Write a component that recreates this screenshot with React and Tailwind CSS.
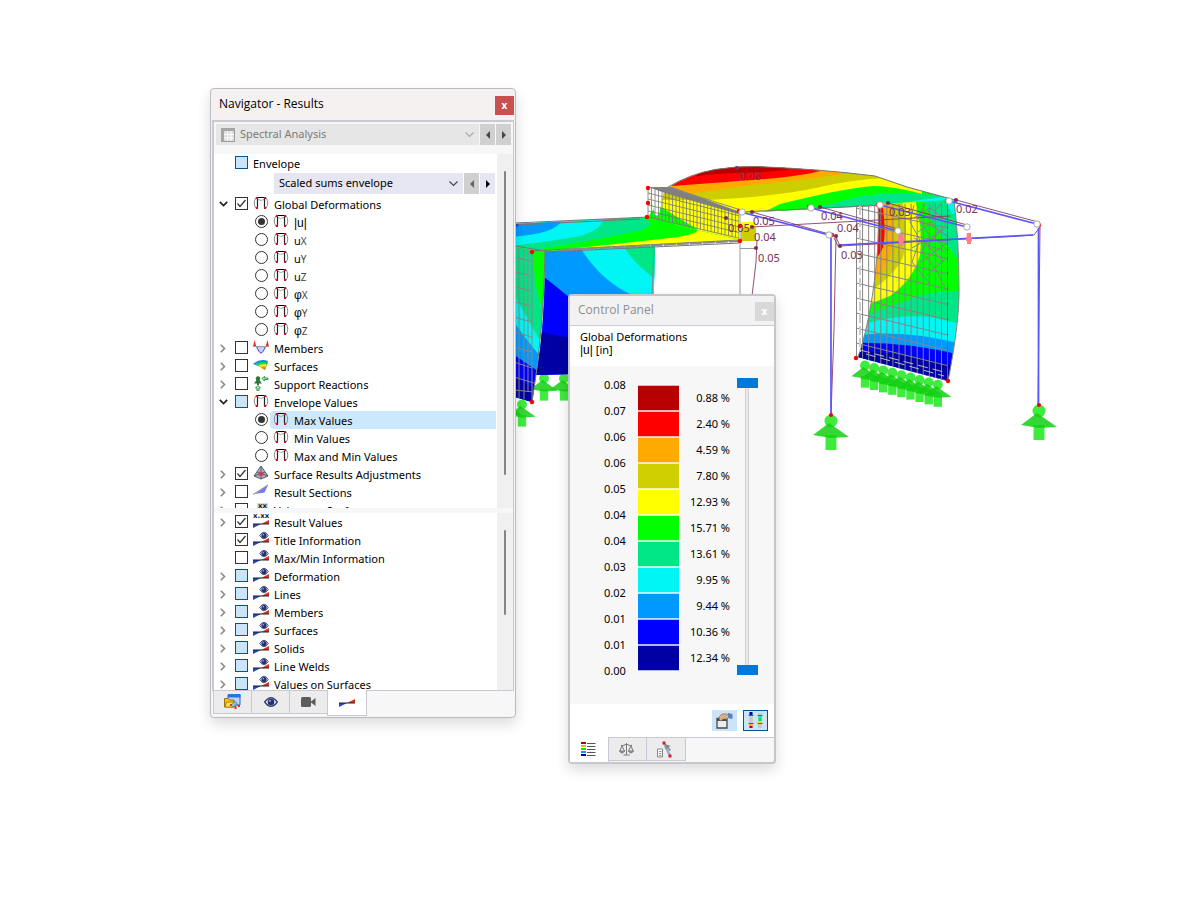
import React from "react";

/* ---------- small drawings ---------- */

function DeformIcon() {
  return (
    <svg width="16" height="14" viewBox="0 0 16 14" className="shrink-0" aria-hidden="true">
      <path d="M3 1.500Q-.5 7 3 12.500M13 1.500Q16.500 7 13 12.500" fill="none" stroke="#8a8a8a" />
      <path d="M4 3Q8 6 12 3" fill="none" stroke="#aaa" />
      <path d="M4.500 11.500V2.500M11.500 11.500V2.500" stroke="#222" strokeWidth="1.200" />
      <path d="M4 1.500H12" stroke="#000" />
      <path d="M3 1h2v2H3zM11 1h2v2h-2zM3 11h2v2H3zM11 11h2v2h-2z" fill="#c8171e" />
    </svg>
  );
}

function MembersIcon() {
  return (
    <svg width="16" height="14" viewBox="0 0 16 14" className="shrink-0" aria-hidden="true">
      <path d="M0 7L1.500 0L3.500 7zM12.500 7L14.500 0L16 7z" fill="#f02a2a" />
      <path d="M3.500 6.500H12.500Q10 13 8 13T3.500 6.500z" fill="#c8cdf5" stroke="#3a45d8" />
      <path d="M0 6.500H16" stroke="#999" />
    </svg>
  );
}

function SurfacesIcon() {
  return (
    <svg width="16" height="14" viewBox="0 0 16 14" className="shrink-0" aria-hidden="true">
      <path d="M0 6Q7 0 15 3L12 12Q6 8 0 6z" fill="#1188ee" />
      <path d="M2 6Q8 3 15 4.500L12 12Q7 8 2 6z" fill="#16d84a" />
      <path d="M5 7.500Q10 5 14 6.500L12 12Q8 9 5 7.500z" fill="#f5e520" />
      <path d="M8 9.500Q10.500 8 13 9L12 12z" fill="#f08a10" />
    </svg>
  );
}

function SupportIcon() {
  return (
    <svg width="16" height="15" viewBox="0 0 16 15" className="shrink-0" aria-hidden="true">
      <circle cx="5" cy="2.500" r="2.200" fill="#267a3a" />
      <path d="M5 2L9 7.500H1zM4 6h2v3H4z" fill="#267a3a" />
      <path d="M9 2.500l2.500-2v1.500H15v1.500h-3.500V5zM5 9.500l2.500 2.500H6v3H4v-3H2.500z" fill="#bfeec8" stroke="#2f9a4a" strokeWidth="1" />
    </svg>
  );
}

function AdjustIcon() {
  return (
    <svg width="16" height="14" viewBox="0 0 16 14" className="shrink-0" aria-hidden="true">
      <path d="M8 0L1 10L8 13L15 10z" fill="#a9adc2" stroke="#4c506a" strokeWidth=".9" />
      <path d="M8 0V13M4 6L15 10M12 6L1 10" stroke="#4c506a" strokeWidth=".8" />
      <path d="M4 8.500l4-3 4 3-4 2z" fill="#d8333f" opacity=".75" />
    </svg>
  );
}

function SectionIcon() {
  return (
    <svg width="16" height="14" viewBox="0 0 16 14" className="shrink-0" aria-hidden="true">
      <path d="M2 10L15 1L11.500 8.500z" fill="#727cf2" />
      <path d="M0 10.500L15 1" stroke="#888" />
    </svg>
  );
}

function BeamShape({ y = 0 }) {
  return (
    <g transform={`translate(0 ${y})`}>
      <path d="M0 4H8L0 8z" fill="#2546c8" />
      <path d="M8 4L16 0V4z" fill="#d8321e" />
      <path d="M0 4H16" stroke="#222" />
    </g>
  );
}

function EyeBeamIcon() {
  return (
    <svg width="16" height="14" viewBox="0 0 16 14" className="shrink-0 overflow-visible" aria-hidden="true">
      <BeamShape y={6} />
      <path d="M6.700 3.500Q11 -3 15.300 3.500Q11 10 6.700 3.500z" fill="#dfe3f5" stroke="#4a5280" />
      <circle cx="11" cy="3.500" r="2.600" fill="#27306e" />
      <circle cx="10.300" cy="2.800" r=".8" fill="#9fb0ee" />
    </svg>
  );
}

function ValueBeamIcon() {
  return (
    <svg width="16" height="14" viewBox="0 0 16 14" className="shrink-0 overflow-visible" aria-hidden="true">
      <text x="0" y="4" fontSize="7" fontWeight="700" fontFamily="'DejaVu Sans',sans-serif" fill="#222">x.xx</text>
      <BeamShape y={6} />
    </svg>
  );
}

function XxIcon() {
  return (
    <svg width="16" height="14" viewBox="0 0 16 14" className="shrink-0" aria-hidden="true">
      <path d="M4 1H15V12H4z" fill="#d8d8d8" />
      <text x="5" y="6" fontSize="7" fontWeight="700" fontFamily="'DejaVu Sans',sans-serif" fill="#222">xx</text>
    </svg>
  );
}

const ICONS = {
  deform: DeformIcon,
  members: MembersIcon,
  surfaces: SurfacesIcon,
  support: SupportIcon,
  adjust: AdjustIcon,
  section: SectionIcon,
  eye: EyeBeamIcon,
  value: ValueBeamIcon,
  xx: XxIcon,
};

function Chevron({ className }) {
  return (
    <svg width="9" height="6" viewBox="0 0 9 6" className={className} aria-hidden="true">
      <path d="M.5 .5L4.500 4.500L8.500 .5" fill="none" stroke="currentColor" strokeWidth="1.200" />
    </svg>
  );
}

function Arrow({ dir }) {
  return (
    <svg width="4" height="8" viewBox="0 0 4 8" aria-hidden="true">
      <path d={dir === "left" ? "M4 0V8L0 4z" : "M0 0V8L4 4z"} fill="currentColor" />
    </svg>
  );
}

/* ---------- tree ---------- */

function Box({ state, id, name, radio }) {
  if (radio) {
    return (
      <span className="relative size-[13px] shrink-0">
        <input id={id} name={name} type="radio" defaultChecked={state === "on"} className="peer block size-[13px] appearance-none rounded-full border border-[#333] bg-white" />
        <span className="pointer-events-none absolute inset-[3px] hidden rounded-full bg-[#333] peer-checked:block" />
      </span>
    );
  }
  if (state === "mixed") {
    return <input id={id} type="checkbox" ref={(el) => { if (el) el.indeterminate = true; }} className="block size-[13px] shrink-0 appearance-none border border-[#005499] bg-[#cce4f7]" />;
  }
  return (
    <span className="relative block size-[13px] shrink-0">
      <input id={id} type="checkbox" defaultChecked={state === "on"} className="peer block size-[13px] appearance-none border border-[#333] bg-white" />
      <svg viewBox="0 0 13 13" className="pointer-events-none absolute inset-0 hidden size-[13px] peer-checked:block" aria-hidden="true">
        <path d="M2.500 6.500L5 9.500L10.500 3" fill="none" stroke="#333" strokeWidth="1.200" />
      </svg>
    </span>
  );
}

function Expander({ open, label }) {
  return (
    <button type="button" aria-label={`Toggle ${label}`} className={open ? "grid h-[18px] w-4 place-items-center text-[#222]" : "grid h-[18px] w-4 place-items-center text-[#888]"}>
      {open ? (
        <svg width="9" height="6" viewBox="0 0 9 6"><path d="M.8 .8L4.500 4.500L8.200 .8" fill="none" stroke="currentColor" strokeWidth="1.700" /></svg>
      ) : (
        <svg width="6" height="9" viewBox="0 0 6 9"><path d="M.8 .8L4.500 4.500L.8 8.200" fill="none" stroke="currentColor" strokeWidth="1.600" /></svg>
      )}
    </button>
  );
}

function Row({ item, prefix }) {
  const [kind, icon, text, state, exp, sub] = item;
  const Icon = ICONS[icon];
  const id = `${prefix}-${text}${sub || ""}`.replace(/\s/g, "-");
  const symbol = text === "φ" || text === "|u|";
  const label = (
    <span className="pt-0.5 leading-4">
      <span className={symbol ? "font-['Liberation_Sans',sans-serif] text-[12px]" : ""}>{text}</span>
      {sub ? <span className="text-[10px] text-[#444]">{sub}</span> : null}
    </span>
  );
  if (kind === "radio") {
    const selected = text === "Max Values";
    return (
      <li className="flex h-[18px] pl-[41px] pr-px">
        <span className="mr-0.5 pt-0.5"><Box radio id={id} name={exp} state={state} /></span>
        <label htmlFor={id} className={selected ? "flex flex-1 items-start gap-[5px] rounded-l-sm bg-[#cce8ff] pl-[3px]" : "flex flex-1 items-start gap-[5px] pl-[3px]"}>
          <span className="pt-px"><Icon /></span>
          {label}
        </label>
      </li>
    );
  }
  return (
    <li className="flex h-[18px] items-start pl-px">
      <span className="w-5">{exp ? <Expander open={exp === "open"} label={text} /> : null}</span>
      <span className="pt-0.5"><Box id={id} state={state} /></span>
      <label htmlFor={id} className="flex items-start gap-[5px] pl-[5px]">
        <span className="pt-px"><Icon /></span>
        {label}
      </label>
    </li>
  );
}

const TREE = [
  ["check", "deform", "Global Deformations", "on", "open"],
  ["radio", "deform", "|u|", "on", "gd"],
  ["radio", "deform", "u", "off", "gd", "X"],
  ["radio", "deform", "u", "off", "gd", "Y"],
  ["radio", "deform", "u", "off", "gd", "Z"],
  ["radio", "deform", "φ", "off", "gd", "X"],
  ["radio", "deform", "φ", "off", "gd", "Y"],
  ["radio", "deform", "φ", "off", "gd", "Z"],
  ["check", "members", "Members", "off", "closed"],
  ["check", "surfaces", "Surfaces", "off", "closed"],
  ["check", "support", "Support Reactions", "off", "closed"],
  ["check", "deform", "Envelope Values", "mixed", "open"],
  ["radio", "deform", "Max Values", "on", "ev"],
  ["radio", "deform", "Min Values", "off", "ev"],
  ["radio", "deform", "Max and Min Values", "off", "ev"],
  ["check", "adjust", "Surface Results Adjustments", "on", "closed"],
  ["check", "section", "Result Sections", "off", "closed"],
  ["check", "xx", "Values on Surfaces", "off", "closed"],
];

const DISPLAY = [
  ["check", "value", "Result Values", "on", "closed"],
  ["check", "eye", "Title Information", "on", null],
  ["check", "eye", "Max/Min Information", "off", null],
  ["check", "eye", "Deformation", "mixed", "closed"],
  ["check", "eye", "Lines", "mixed", "closed"],
  ["check", "eye", "Members", "mixed", "closed"],
  ["check", "eye", "Surfaces", "mixed", "closed"],
  ["check", "eye", "Solids", "mixed", "closed"],
  ["check", "eye", "Line Welds", "mixed", "closed"],
  ["check", "eye", "Values on Surfaces", "mixed", "closed"],
];

/* ---------- navigator window ---------- */

function Navigator() {
  return (
    <section aria-label="Navigator - Results" className="absolute left-[210px] top-[88px] w-[306px] rounded-[4px] border border-[#bcbcc0] bg-[#f5f3f4] p-px shadow-[0_6px_14px_rgba(0,0,0,0.14)]">
      <header className="flex h-[30px] items-center justify-between bg-[#f5f1f1] pl-[7px]">
        <h2 className="pb-[3px] font-['Open_Sans',sans-serif] text-[12px]">Navigator - Results</h2>
        <button type="button" aria-label="Close navigator" className="mt-px grid h-[19px] w-[19px] place-items-center bg-[#c75050] pb-0.5 text-[10px] font-bold leading-none text-white">x</button>
      </header>
      <div className="border-l-2 border-r border-t-2 border-[#c9c9d3] bg-[#f7f7f7]">
        <div className="flex gap-px px-0.5 pb-[9px] pt-0.5 text-[#7b7b7b]">
          <div className="relative flex h-[21px] flex-1 items-center bg-[#e6e6e6] pl-[5px]">
            <svg width="14" height="14" viewBox="0 0 14 14" aria-hidden="true">
              <path d="M.5 .5H13.500V13.500H.5z" fill="#ddd" stroke="#999" />
              <path d="M0 0H14V3H0zM0 0H3V14H0z" fill="#a5a5a5" />
              <path d="M3 6.500H13M3 10H13M6.500 3V13M10 3V13" stroke="#fff" />
            </svg>
            <select aria-label="Analysis" className="h-full flex-1 appearance-none bg-transparent pl-[5px]">
              <option>Spectral Analysis</option>
            </select>
            <Chevron className="pointer-events-none absolute right-[5px] top-2 text-[#aaa]" />
          </div>
          <button type="button" aria-label="Previous analysis" className="grid w-[15px] place-items-center bg-[#d0d0d0] text-[#444]"><Arrow dir="left" /></button>
          <button type="button" aria-label="Next analysis" className="grid w-[15px] place-items-center bg-[#d0d0d0] text-[#444]"><Arrow dir="right" /></button>
        </div>
        <div className="flex h-[354px]">
          <div className="flex-1 overflow-hidden bg-white">
            <div className="flex h-[18px] items-start pl-[21px] pt-0.5">
              <Box id="envelope" state="mixed" />
              <label htmlFor="envelope" className="pl-[5px] leading-4">Envelope</label>
            </div>
            <div className="flex h-[23px] gap-px py-px pl-[60px] pr-0.5">
              <div className="relative flex-1 bg-[#e6e6f2]">
                <select aria-label="Envelope type" className="h-full w-full appearance-none bg-transparent pl-[5px]">
                  <option>Scaled sums envelope</option>
                </select>
                <Chevron className="pointer-events-none absolute right-[5px] top-2 text-[#444]" />
              </div>
              <button type="button" aria-label="Previous envelope" className="grid w-[15px] place-items-center bg-[#d0d0d0] text-[#666]"><Arrow dir="left" /></button>
              <button type="button" aria-label="Next envelope" className="grid w-[15px] place-items-center bg-[#e6e6f2] text-black"><Arrow dir="right" /></button>
            </div>
            <ul>{TREE.map((it, i) => <Row key={i} item={it} prefix="r" />)}</ul>
          </div>
          <div className="w-4 bg-[#f0f0f0] pl-[7px] pt-[17px]"><div className="h-[304px] w-0.5 rounded bg-[#858585]" /></div>
        </div>
        <div className="mt-[5px] flex h-[177px]">
          <ul className="flex-1 overflow-hidden bg-white">{DISPLAY.map((it, i) => <Row key={i} item={it} prefix="d" />)}</ul>
          <div className="w-4 bg-[#f0f0f0] pl-[7px] pt-[17px]"><div className="h-[85px] w-0.5 rounded bg-[#858585]" /></div>
        </div>
      </div>
      <nav aria-label="Navigator tabs" className="flex h-[26px] items-start border-t border-[#c9c9d3] bg-[#f7f7f7] pl-px">
        <button type="button" aria-label="Data" className="grid h-[23px] w-[39px] place-items-center border-x border-b border-[#c9c9d3] bg-[#ececec]">
          <svg width="17" height="16" viewBox="0 0 17 16" aria-hidden="true">
            <path d="M4 1H16V11H4z" fill="#bcd6fa" stroke="#2c62d8" /><path d="M4 0H16.500V3.500H4z" fill="#2f6fe4" />
            <path d="M.5 4.500H4L5.500 6H10V13H.5z" fill="#f5c518" stroke="#9c7300" />
            <path d="M2.500 8H12L10 13H1z" fill="#ffdf4d" stroke="#9c7300" strokeWidth=".8" />
            <path d="M7 11L11 7.500L15.500 12L12 10.500L9.500 13z" fill="#8bc8e8" stroke="#386d8f" strokeWidth=".7" />
            <path d="M10.500 12h2v3h-2zM6 10h2v2H6zM14 11h2v2h-2z" fill="#d8391e" />
          </svg>
        </button>
        <button type="button" aria-label="Display" className="grid h-[23px] w-[38px] place-items-center border-b border-r border-[#c9c9d3] bg-[#ececec]">
          <svg width="14" height="10" viewBox="0 0 14 10" aria-hidden="true">
            <path d="M.7 5Q7 -3.500 13.300 5Q7 13.500 .7 5z" fill="#eef0fa" stroke="#36406e" strokeWidth="1.300" />
            <circle cx="7" cy="5" r="3.300" fill="#26306e" /><circle cx="6" cy="4" r="1" fill="#9fb0ee" />
          </svg>
        </button>
        <button type="button" aria-label="Views" className="grid h-[23px] w-[37px] place-items-center border-b border-[#c9c9d3] bg-[#ececec]">
          <svg width="15" height="10" viewBox="0 0 15 10" aria-hidden="true">
            <rect width="10" height="10" rx="1.500" fill="#5d5d5d" /><path d="M10 4.500L14.500 1V9L10 5.500z" fill="#5d5d5d" />
          </svg>
        </button>
        <button type="button" aria-label="Results" className="-mt-px grid h-[26px] w-10 place-items-center border-x border-b border-[#c9c9d3] bg-white">
          <svg width="16" height="8" viewBox="0 0 16 8" aria-hidden="true"><BeamShape /></svg>
        </button>
      </nav>
    </section>
  );
}

/* ---------- control panel window ---------- */

const LIMITS = ["0.08", "0.07", "0.06", "0.06", "0.05", "0.04", "0.04", "0.03", "0.02", "0.01", "0.01", "0.00"];
const BANDS = [
  ["bg-[#b90000]", "0.88 %"],
  ["bg-[#ff0000]", "2.40 %"],
  ["bg-[#ffaa00]", "4.59 %"],
  ["bg-[#d0d000]", "7.80 %"],
  ["bg-[#ffff00]", "12.93 %"],
  ["bg-[#00ff00]", "15.71 %"],
  ["bg-[#00e687]", "13.61 %"],
  ["bg-[#00f5f5]", "9.95 %"],
  ["bg-[#0099ff]", "9.44 %"],
  ["bg-[#0000ff]", "10.36 %"],
  ["bg-[#0000a5]", "12.34 %"],
];

const RANGE =
  "pointer-events-none absolute inset-0 m-0 h-full w-full appearance-none bg-transparent [direction:rtl] [writing-mode:vertical-lr] [&::-webkit-slider-thumb]:pointer-events-auto [&::-webkit-slider-thumb]:h-[10px] [&::-webkit-slider-thumb]:w-[21px] [&::-webkit-slider-thumb]:appearance-none [&::-webkit-slider-thumb]:bg-[#0078d7]";

function ControlPanel() {
  return (
    <section aria-label="Control Panel" className="absolute left-[568px] top-[294px] w-[208px] rounded-[4px] border-2 border-[#c6c6cb] bg-[#f7f7f7] shadow-[0_6px_14px_rgba(0,0,0,0.14)]">
      <header className="flex h-[29px] items-center justify-between bg-[#f2f2f2] pl-2">
        <h2 className="pb-0.5 font-['Open_Sans',sans-serif] text-[12px] text-[#8f8f8f]">Control Panel</h2>
        <button type="button" aria-label="Close control panel" className="mt-0.5 grid h-[19px] w-[19px] place-items-center bg-[#d9d9d9] pb-0.5 text-[10px] font-bold leading-none text-white">x</button>
      </header>
      <div className="h-[41px] border-t border-[#c9c9d3] bg-white pl-[10px] pt-1 leading-[13px]">
        <p>Global Deformations</p>
        <p><span className="font-['Liberation_Sans',sans-serif] text-[12px]">|u|</span> [in]</p>
      </div>
      <div className="flex h-[338px] items-start pl-[34px] pt-[6px]">
        <ol className="w-[34px]">
          {LIMITS.map((v, i) => <li key={i} className="h-[26px] leading-[26px]">{v}</li>)}
        </ol>
        <ul className="w-[92px] pt-[13px]">
          {BANDS.map(([c, p]) => (
            <li key={p} className="flex h-[26px] items-center justify-between">
              <span className={`h-full w-[41px] border-y border-white/70 ${c}`} />
              <span>{p}</span>
            </li>
          ))}
        </ul>
        <div className="relative ml-[7px] mt-[6px] h-[297px] w-[21px]">
          <div className="ml-2 mt-[5px] h-[291px] w-[4px] border border-[#d2d2d2] bg-[#e9e9e9]" />
          <input type="range" aria-label="Upper limit" defaultValue="100" className={RANGE} />
          <input type="range" aria-label="Lower limit" defaultValue="0" className={RANGE} />
        </div>
      </div>
      <div className="flex h-[33px] justify-end gap-[6px] bg-white pr-[6px] pt-[6px]">
        <button type="button" aria-label="Edit colour scale" className="grid h-[21px] w-[25px] place-items-center bg-[#cce4f7]">
          <svg width="17" height="16" viewBox="0 0 17 16" aria-hidden="true">
            <path d="M1 5.500H11V15H1z" fill="#ececec" stroke="#4a4a4a" strokeWidth="1.300" /><path d="M1 5H11V8H1z" fill="#4d4d4d" />
            <path d="M3 4L6 1H11L14 3L11 6H7L5 8L3.500 7z" fill="#dcae88" stroke="#8a6950" strokeWidth=".7" />
            <path d="M12 0L16.500 1V6L12 5z" fill="#5782c0" />
          </svg>
        </button>
        <button type="button" aria-label="Show limits" aria-pressed="true" className="grid h-[21px] w-[25px] place-items-center border border-[#005499] bg-[#cce4f7]">
          <svg width="15" height="17" viewBox="0 0 15 17" aria-hidden="true">
            <path d="M1 1H5V16H1zM10 1H14V16H10z" fill="#c9c9c9" />
            <path d="M1.500 0H4.500V3H1.500z" fill="#0000a5" /><path d="M1.500 12H4.500V14H1.500z" fill="#ffaa00" /><path d="M1.500 14H4.500V16H1.500z" fill="#b90000" />
            <path d="M10.500 4H13.500V6H10.500z" fill="#00e5f5" /><path d="M10.500 6H13.500V9H10.500z" fill="#00e640" /><path d="M10.500 9H13.500V11H10.500z" fill="#e8e000" />
            <path d="M.5 3.500H5.500M.5 11.500H5.500M9.500 3.500H14.500M9.500 11.500H14.500" stroke="#0078d7" />
          </svg>
        </button>
      </div>
      <nav aria-label="Control panel tabs" className="flex h-[25px] items-start border-t border-[#c9c9d3]">
        <button type="button" aria-label="Colour scale" className="-mt-px grid h-[26px] w-[39px] place-items-center border-b border-r border-[#c9c9d3] bg-white pr-0.5">
          <svg width="15" height="15" viewBox="0 0 15 15" aria-hidden="true">
            <path d="M0 0H5V2H0z" fill="#b90000" /><path d="M0 3H5V5H0z" fill="#ffaa00" /><path d="M0 6H5V8H0z" fill="#00f000" /><path d="M0 9H5V11H0z" fill="#0099ff" /><path d="M0 12H5V14H0z" fill="#0000a5" />
            <path d="M6 1.500H14.500M6 4.500H14.500M6 7.500H14.500M6 10.500H14.500M6 13.500H14.500" stroke="#555" />
          </svg>
        </button>
        <button type="button" aria-label="Factors" className="grid h-[23px] w-[38px] place-items-center border-b border-r border-[#c9c9d3] bg-[#ececec] pr-0.5">
          <svg width="15" height="14" viewBox="0 0 15 14" fill="none" stroke="#777" aria-hidden="true">
            <path d="M7.500 1V12.500M4.500 13H10.500M2 3.500Q5 4 7.500 2Q10 4 13 3.500M3 4L.8 9M3 4L5.500 9M12 4L9.500 9M12 4L14.200 9" />
            <path d="M.5 9H5.700Q3 13 .5 9zM9.300 9H14.500Q12 13 9.300 9z" fill="#aaa" />
          </svg>
        </button>
        <button type="button" aria-label="Filter" className="grid h-[23px] w-[39px] place-items-center border-b border-r border-[#c9c9d3] bg-[#ececec] pr-0.5">
          <svg width="16" height="17" viewBox="0 0 16 17" aria-hidden="true">
            <path d="M.5 8H5.500V16H.5z" fill="#fafafa" stroke="#888" /><path d="M2 10.500H4.500M2 12.500H4.500M2 14.500H4.500" stroke="#999" />
            <path d="M7 2L13 15" stroke="#93b0cf" strokeWidth="2.500" />
            <path d="M8 3L14 5L11.500 6L14 9L12.500 10L10.500 7L8.500 8z" fill="#888" />
            <path d="M5.500 .5h3v3h-3zM11.500 13.500h3v3h-3z" fill="#dc2020" />
          </svg>
        </button>
      </nav>
    </section>
  );
}

/* ---------- structural model ---------- */

const C = { dr: "#b90000", r: "#ff0000", o: "#ffaa00", ol: "#cdcd00", y: "#ffff00", g: "#00ff00", t: "#00e687", c: "#00f5f5", s: "#0099ff", b: "#0000ff", n: "#0000a5" };

function Support({ x, y, s = 1 }) {
  return (
    <g transform={`translate(${x} ${y}) scale(${s})`} fill="#1fe81f" fillOpacity=".85">
      <circle cx="0" cy="6" r="6.500" />
      <path d="M-5.500 20H5.500V35H-5.500z" />
      <path d="M-18 20L-2 8L18 22L0 23z" fill="#12d012" />
    </g>
  );
}

const range = (n) => Array.from({ length: n }, (_, i) => i);

const LABELS = [
  [739, 180, "0.08"], [728, 232, "0.05"], [753, 225, "0.05"], [754, 241, "0.04"], [758, 262, "0.05"],
  [821, 220, "0.04"], [837, 232, "0.04"], [841, 259, "0.03"], [889, 216, "0.03"], [956, 213, "0.02"],
];

function Model() {
  return (
    <svg width="1200" height="900" viewBox="0 0 1200 900" className="absolute left-0 top-0" role="img" aria-label="Deformed structural model">
      <defs>
        <clipPath id="roof"><path d="M648 187L668 188Q690 174 715 169.500Q737 166 756 166.500Q820 169 875 176L907 187L955 200L950 202L740 213L740 240L680 226L655 215z" /></clipPath>
        <clipPath id="wall"><path d="M878 204Q880 250 872 298Q866 335 858 357L948 381Q960 320 959 285Q959 240 954 200z" /></clipPath>
        <clipPath id="strip"><path d="M515 224L648 217L660 200L740 222H756V241H740L545 251L515 247z" /></clipPath>
        <clipPath id="back"><path d="M545 250L655 246L652 372L536 375Q545 330 545 250z" /></clipPath>
        <clipPath id="side"><path d="M515 246L545 251Q544 330 532 402L515 397z" /></clipPath>
        <clipPath id="net"><path d="M856 205L947 203V381L856 357z" /></clipPath>
      </defs>

      <Support x={544} y={374} s={0.76} />
      <Support x={564} y={374} s={0.76} />
      <Support x={522} y={400} s={0.76} />
      <Support x={508} y={398} s={0.76} />

      <g clipPath="url(#back)">
        <path d="M530 240H660V380H530z" fill={C.s} />
        <path d="M576 240Q592 270 616 286T660 304V240z" fill={C.c} />
        <path d="M620 240Q632 264 660 282V240z" fill={C.t} />
        <path d="M530 266Q556 286 575 302T660 330V380H530z" fill={C.b} />
        <path d="M530 330L575 339L660 345V380H530z" fill={C.n} />
      </g>
      <path d="M654 247L652 296" stroke="#888" />

      <g clipPath="url(#side)">
        <path d="M510 240H550V410H510z" fill={C.t} />
        <path d="M532 250H546V305H541Q535 290 532 250z" fill={C.g} />
        <path d="M510 288Q520 305 545 350V410H510z" fill={C.c} />
        <path d="M510 316Q522 335 545 362V410H510z" fill={C.s} />
        <path d="M510 352L545 376V410H510z" fill={C.b} />
        <path d="M510 374L545 395V410H510z" fill={C.n} />
        <path d="M519 247V399M524 248V400M528 250V392M532 252V402M514 257L532 261M514 272L532 276M514 287L532 291M514 302L532 306M514 317L532 322M514 332L532 337M514 347L532 352M514 362L532 368M514 377L534 383M514 390L534 392" fill="none" stroke="#888" />
      </g>
      <path d="M545 251Q544 330 532 402" fill="none" stroke="#777" />

      <g clipPath="url(#strip)">
        <path d="M510 190H760V255H510z" fill={C.y} />
        <path d="M510 255L616 244L670 238Q700 234 697 229Q690 223 677 217L661 206Q655 210 657 200H510z" fill={C.g} />
        <path d="M510 252L535 250L593 240L643 230Q658 222 638 216H510z" fill={C.t} />
        <path d="M510 246Q560 240 580 236Q604 229 604 216H510z" fill={C.c} />
        <path d="M510 237Q556 234 562 220H510z" fill={C.s} />
        <path d="M510 228L518 226L519 222H510z" fill={C.b} />
        <path d="M741 228H757V242H741z" fill={C.ol} />
      </g>
      <path d="M515 223L648 217M515 225L640 219M532 251L740 240M545 252L740 243M515 246L545 251" fill="none" stroke="#777" />
      <path d="M560 250L740 241" stroke="#8a8a8a" strokeWidth="2" strokeDasharray="12 1" />

      <g clipPath="url(#roof)">
        <path d="M640 160H960V245H640z" fill={C.t} />
        <path d="M886 207Q915 199 960 196V207z" fill={C.c} />
        <path d="M640 160H938V196Q895 189 853 198L795 213V245H640z" fill={C.g} />
        <path d="M640 160H922V194Q893 186 873 186Q845 188 780 204L762 213V245H640z" fill={C.y} />
        <path d="M640 160H884V178Q850 180 820 187T740 198L708 200L660 200L640 196z" fill={C.ol} />
        <path d="M640 160H850V173Q820 178 780 182T690 194L640 192z" fill={C.o} />
        <path d="M640 160H820V171Q800 176 765 179T672 186z" fill={C.r} />
        <path d="M690 160H795V168Q780 172 740 173T697 177z" fill={C.dr} />
        <path d="M652 206L661 207Q680 219 697 229L696 232L652 220z" fill={C.g} />
        <path d="M648 187L665 187Q661 202 659 215L648 217z" fill="#fff" />
      </g>
      <path d="M668 187Q690 174 715 169.500Q737 166 756 166.500Q820 169 875 176L907 187L955 200L950 202L740 212" fill="none" stroke="#777" />
      <path d="M648 187L672 187L740 212L738 214L665 193z" fill="#808080" />
      <path d="M668 187L741 210" stroke="#888" fill="none" />
      <g stroke="#777" strokeWidth=".8" fill="none">
        {range(27).map((i) => {
          const x = 648 + i * 3.5;
          return <path key={i} d={`M${x} ${187 + i * 0.95}V${Math.min(238, 217 + i * 0.82)}`} />;
        })}
        {range(5).map((i) => <path key={i} d={`M648 ${193 + i * 6}L740 ${216 + i * 5.6}`} />)}
      </g>

      <g clipPath="url(#wall)">
        <path d="M850 195H965V390H850z" fill={C.g} />
        <path d="M924 200Q938 240 965 266V195z" fill={C.t} />
        <path d="M945 200H960V214H952z" fill={C.c} />
        <path d="M850 195H914Q923 225 920 255Q913 280 890 296L850 312z" fill={C.y} />
        <path d="M850 195H901Q910 230 903 257Q893 280 850 304z" fill={C.ol} />
        <path d="M850 195H891Q898 240 887 264Q876 285 850 296z" fill={C.o} />
        <path d="M850 195H881Q887 230 883 247Q879 262 850 274z" fill={C.r} />
        <path d="M850 320L900 303Q930 289 965 291V390H850z" fill={C.t} />
        <path d="M850 328Q895 313 930 317L965 325V390H850z" fill={C.c} />
        <path d="M850 336Q905 328 965 345V390H850z" fill={C.s} />
        <path d="M850 343Q905 341 965 356V390H850z" fill={C.b} />
        <path d="M850 351Q900 351 965 369V390H850z" fill={C.n} />
      </g>
      <path d="M878 204Q880 250 872 298Q866 335 858 357M948 381Q960 320 959 285Q959 240 954 200" fill="none" stroke="#888" />

      <g clipPath="url(#net)" stroke="#858585" fill="none">
        {range(16).map((i) => <path key={i} d={`M${856.5 + i * 6.07} 203V385`} />)}
        {range(11).map((i) => <path key={i} d={`M856 ${208 + i * 15}L948 ${228 + i * 15.300}`} />)}
        <path d="M914 205L910 222L920 240L912 262L930 284M925 204L918 218L930 236L922 252L936 270L946 290M934 204L926 216L938 230L928 246L944 262M942 203L934 212L946 224L934 238L947 250M914 218L930 208L944 218M918 232L940 216M912 248L944 230M920 262L946 244M926 276L946 258M920 222L932 226L947 236M914 238L930 246L946 252" />
        <path d="M860 350L944 372M866 354L944 376" stroke="#bbb" strokeDasharray="10 5" />
      </g>
      <path d="M860 206V352" stroke="#ccc" strokeWidth="2" strokeDasharray="9 3" />
      <path d="M947.500 202V381" stroke="#666" />
      {range(9).map((i) => <Support key={i} x={865 + i * 9.1} y={361 + i * 2.400} s={0.76} />)}

      <path d="M740 213V296" stroke="#ccc" strokeWidth="2" />
      <path d="M740 248.500H756M741 238V242" stroke="#999" fill="none" />

      <g stroke="#8a3a66" fill="none">
        <path d="M752 212L829 234M752 227L950 216M757 240L756 262L752 296M820 207L898 229M888 203L967 225M956 200L1038 222M836 237L834 330L831 415M836 237L840 246L1034 235L1040 227L1038 405M838 246L834 238" strokeWidth=".9" />
      </g>
      <g stroke="#5a55ff" strokeWidth="1.700" fill="none">
        <path d="M741 212L829 235M811 208L898 231M880 205L967 227M949 201L1037 224M831 235V415M840 245L1033 235M1038.500 228V405" />
      </g>
      <g fill="#ff8080">
        <path d="M898 234h5v4h1v4h-1v4h-4v-4h-1zM967 233h4v4h1v4h-1v3h-4v-3h-1z" />
      </g>
      <g fill="#7a3050">
        {[[737, 168], [752, 212], [752, 227], [756, 248], [820, 207], [888, 203], [956, 200], [836, 236], [840, 246], [726, 218]].map(([x, y]) => <circle key={`${x}-${y}`} cx={x} cy={y} r="2.100" />)}
      </g>
      <g fill="#ff0000">
        {[[648, 188], [648, 203], [647, 217], [532, 252], [740, 226], [740, 241], [739, 211], [532, 402], [856, 358], [948, 381], [1039, 225], [832, 235], [809, 207], [878, 205], [947, 201]].map(([x, y]) => <circle key={`${x}-${y}`} cx={x} cy={y} r="2.200" />)}
      </g>
      <g fill="#fff" stroke="#aaa">
        {[[742, 212], [829, 235], [811, 208], [898, 231], [880, 205], [967, 227], [949, 201], [1037, 224]].map(([x, y]) => <circle key={`${x}-${y}`} cx={x} cy={y} r="3.200" />)}
      </g>
      <Support x={831} y={415} />
      <Support x={1039} y={405} />
      <circle cx="831" cy="415" r="2" fill="#f00" />
      <circle cx="1039" cy="405" r="2" fill="#f00" />
      <g fontSize="11" fill="#7c3150">
        {LABELS.map(([x, y, t]) => <text key={`${x}-${y}`} x={x} y={y}>{t}</text>)}
      </g>
    </svg>
  );
}

export default function App() {
  return (
    <main className="relative min-h-screen overflow-hidden bg-white font-['Noto_Sans',sans-serif] text-[11px] text-black">
      <Model />
      <Navigator />
      <ControlPanel />
    </main>
  );
}
